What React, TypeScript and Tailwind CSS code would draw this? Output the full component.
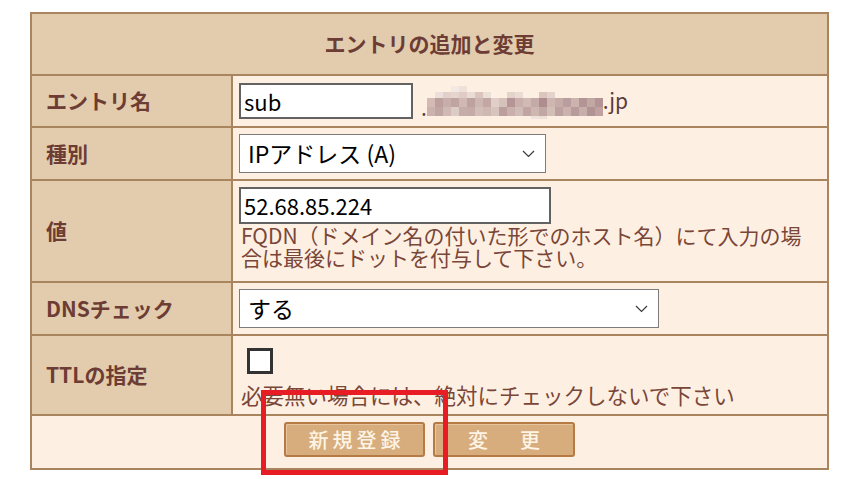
import React from 'react';

const jp = { fontFamily: '"Noto Sans CJK JP", "Noto Sans", sans-serif' };

// pixelated (mosaic) part of the domain name
const mosaic = [
  ['', '', '', '#f4e8e2', '#efe1da', '', '', '', '', '', '', '', '', '', '', '', '', '', '', '', '', ''],
  ['', '#eddfd9', '#e3d0ca', '#e6d4ce', '#e0ccc6', '#eadbd5', '#d9c4be', '#ecdfd8', '', '', '#e4d2cb', '#eadcd5', '', '', '#dac5bf', '#e4d3cc', '', '', '', '', '', ''],
  ['#d3bab4', '#bd9f9d', '#c8aeaa', '#c0a4a2', '#d0b9b3', '#bea2a0', '#cfb7b1', '#c2a7a5', '#e0cec8', '#d6c1bb', '#b59596', '#cab0ac', '#d1bab4', '#c5aba7', '#ad8d8f', '#cfb7b1', '#c5aca8', '#ba9d9e', '#ccb3ae', '#b39596', '#c2a8a5', '#b29496'],
  ['#cbb2ad', '#c0a5a2', '#cfb9b3', '#ddcbc5', '#c6ada9', '#c5aba7', '#d3bdb7', '#cfb8b2', '#d8c4be', '#bb9f9d', '#c9b0ac', '#d2bcb6', '#c0a5a2', '#cfb7b1', '#c2a8a5', '#d3bdb7', '#bda1a0', '#cbb2ad', '#b89b9b', '#c8aeaa', '#b19395', '#be a2a0'.replace(' ', '')],
  ['', '', '', '', '', '', '', '', '', '', '', '', '', '#efe2dc', '#ecdfd8', '', '', '', '', '', '', ''],
];

function Chevron() {
  return (
    <svg width="13" height="8" viewBox="0 0 13 8" className="shrink-0">
      <polyline points="1,1 6.5,6.5 12,1" fill="none" stroke="#3a3a3a" strokeWidth="1.2" />
    </svg>
  );
}

function Label({ children }: { children: React.ReactNode }) {
  return (
    <div className="bg-[#e2ccad] flex items-center pl-[14px] text-[21px] font-bold text-[#6d3c34]" style={jp}>
      {children}
    </div>
  );
}

function Select({ value, width }: { value: string; width: string }) {
  return (
    <div className={`${width} h-[39px] bg-white border border-[#7c7c7c] flex items-center justify-between pl-[8px] pr-[10px]`}>
      <span className="text-[23px] text-black leading-none" style={jp}>{value}</span>
      <Chevron />
    </div>
  );
}

export default function App() {
  return (
    <div className="relative w-[858px] h-[479px] bg-white pl-[30px] pt-[12px]">
      <div className="w-[799px] grid grid-cols-[199px_594px] grid-rows-[60px_50px_51px_100px_51px_78px_52px] gap-[2px] p-[2px] bg-[#a8855f]">
        <div className="col-span-2 bg-[#e2ccad] flex items-center justify-center text-[21px] font-bold text-[#6d3c34]" style={jp}>
          エントリの追加と変更
        </div>

        <Label>エントリ名</Label>
        <div className="bg-[#fdf0e3] flex items-center pl-[6px]">
          <div className="w-[174px] h-[36px] bg-white border-2 border-[#626262] flex items-center pl-[3px] text-[22px] text-black" style={jp}>
            sub
          </div>
          <span className="ml-[8px] text-[21px] text-[#5a3c3a] self-end mb-[8px] leading-none" style={jp}>.</span>
          <svg width="176" height="36" viewBox="0 0 176 36" className="shrink-0">
            {mosaic.map((row, r) =>
              row.map((c, i) =>
                c ? <rect key={`${r}-${i}`} x={i * 8} y={3 + r * 6 + (r > 1 ? (r - 2) * 3 : 0)} width="8" height={r > 1 && r < 4 ? 9 : 6} fill={c} /> : null
              )
            )}
          </svg>
          <span className="text-[21px] text-[#5a3c3a]" style={jp}>.jp</span>
        </div>

        <Label>種別</Label>
        <div className="bg-[#fdf0e3] flex items-center pl-[6px]">
          <Select value="IPアドレス (A)" width="w-[307px]" />
        </div>

        <Label>値</Label>
        <div className="bg-[#fdf0e3] flex flex-col items-start pl-[6px] pt-[6px]">
          <div className="w-[312px] h-[37px] bg-white border-2 border-[#626262] flex items-center pl-[3px] text-[22px] text-black" style={jp}>
            52.68.85.224
          </div>
          <div className="pl-[2px] text-[21px] leading-[22px] text-[#7a4638]" style={jp}>
            <div>FQDN（ドメイン名の付いた形でのホスト名）にて入力の場</div>
            <div>合は最後にドットを付与して下さい。</div>
          </div>
        </div>

        <Label>DNSチェック</Label>
        <div className="bg-[#fdf0e3] flex items-center pl-[6px]">
          <Select value="する" width="w-[420px]" />
        </div>

        <Label>TTLの指定</Label>
        <div className="bg-[#fdf0e3] flex flex-col items-start pl-[6px] pt-[12px]">
          <div className="ml-[8px] w-[26px] h-[26px] bg-white border-[3px] border-[#333333]" />
          <div className="mt-[10px] pl-[2px] text-[21.5px] leading-[22px] text-[#7a4638]" style={jp}>
            必要無い場合には、絶対にチェックしないで下さい
          </div>
        </div>

        <div className="col-span-2 bg-[#fdf0e3] flex justify-center items-start pt-[6px] gap-[8px]">
          <button className="w-[141px] h-[35px] rounded-[3px] bg-[#d8ad7e] border-2 border-[#b67a45] shadow-[inset_1px_1px_0_#e6c49d] text-[20px] font-medium tracking-[4px] text-[#fdf4e6] flex items-center justify-center pl-[4px]" style={jp}>
            新規登録
          </button>
          <button className="w-[142px] h-[35px] rounded-[3px] bg-[#d8ad7e] border-2 border-[#b67a45] shadow-[inset_1px_1px_0_#e6c49d] text-[20px] font-medium tracking-[6px] text-[#fdf4e6] flex items-center justify-center pl-[6px]" style={jp}>
            変　更
          </button>
        </div>
      </div>

      <div className="absolute left-[261px] top-[390px] w-[187px] h-[85px] border-[5px] border-[#e81c24]" />
    </div>
  );
}
